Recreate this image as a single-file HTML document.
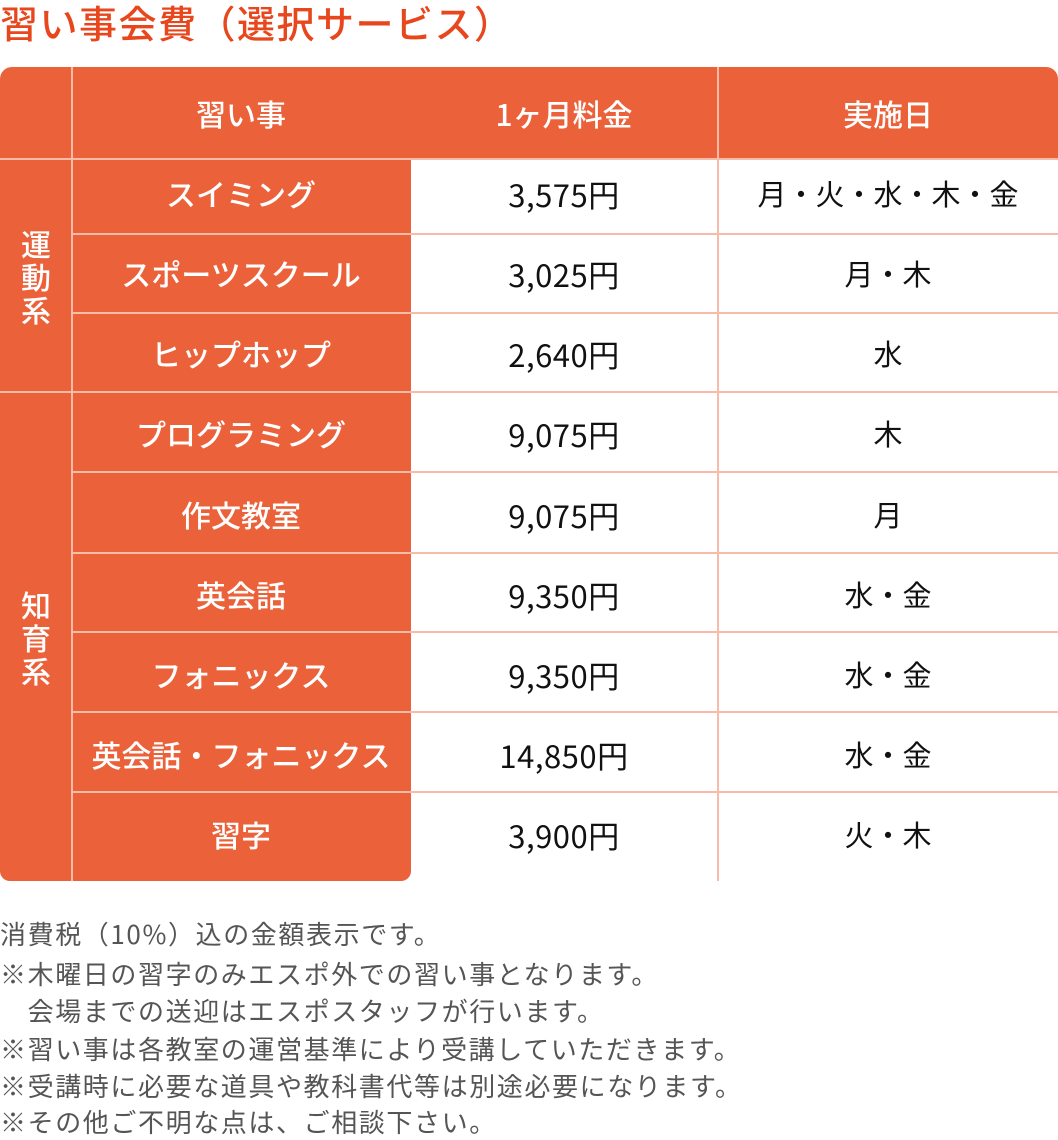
<!DOCTYPE html>
<html><head><meta charset="utf-8"><style>
*{margin:0;padding:0;box-sizing:border-box}
body{width:1058px;height:1136px;background:#fff;font-family:"Noto Sans CJK JP","Liberation Sans",sans-serif;position:relative;overflow:hidden}
.a{position:absolute}
.t{position:absolute;display:flex;align-items:center;justify-content:center;font-size:29px;white-space:nowrap}
.w{color:#fff;font-weight:500;font-size:30px}
.k{color:#111}
.p{font-size:31px;letter-spacing:0.5px}
.hl{position:absolute;height:2px;background:#f8bba8}
.vl{position:absolute;width:2px;background:#f8bba8}
.n{position:absolute;left:0;font-size:26px;letter-spacing:1.6px;color:#555;white-space:nowrap;line-height:1}
</style></head><body>
<div class="a" style="left:0;top:-6px;font-size:38px;color:#e8461c;font-weight:500;letter-spacing:1.5px">習い事会費（選択サービス）</div>
<div class="a" style="left:0;top:67px;width:1058px;height:92px;background:#eb613a;border-radius:12px 12px 0 0"></div>
<div class="a" style="left:0;top:150px;width:411px;height:731px;background:#eb613a;border-radius:0 0 10px 10px"></div>
<div class="vl" style="left:71px;top:67px;height:814px"></div>
<div class="vl" style="left:717px;top:67px;height:814px"></div>
<div class="hl" style="left:0;top:158px;width:1058px"></div>
<div class="hl" style="left:0;top:391px;width:1058px"></div>
<div class="hl" style="left:72px;top:233px;width:986px"></div>
<div class="hl" style="left:72px;top:312px;width:986px"></div>
<div class="hl" style="left:72px;top:471px;width:986px"></div>
<div class="hl" style="left:72px;top:552px;width:986px"></div>
<div class="hl" style="left:72px;top:631px;width:986px"></div>
<div class="hl" style="left:72px;top:711px;width:986px"></div>
<div class="hl" style="left:72px;top:791px;width:986px"></div>
<div class="t w" style="left:72px;width:338px;top:67px;height:92px">習い事</div>
<div class="t w" style="left:410px;width:308px;top:67px;height:92px">1ヶ月料金</div>
<div class="t w" style="left:718px;width:340px;top:67px;height:92px">実施日</div>
<div class="t w" style="left:0;width:72px;top:160px;height:232px;flex-direction:column;line-height:1.1">運<br>動<br>系</div>
<div class="t w" style="left:0;width:72px;top:393px;height:488px;flex-direction:column;line-height:1.1">知<br>育<br>系</div>
<div class="t w" style="left:72px;width:338px;top:173px;height:40px">スイミング</div>
<div class="t k p" style="left:410px;width:308px;top:173px;height:40px">3,575円</div>
<div class="t k" style="left:718px;width:340px;top:173px;height:40px">月・火・水・木・金</div>
<div class="t w" style="left:72px;width:338px;top:253px;height:40px">スポーツスクール</div>
<div class="t k p" style="left:410px;width:308px;top:253px;height:40px">3,025円</div>
<div class="t k" style="left:718px;width:340px;top:253px;height:40px">月・木</div>
<div class="t w" style="left:72px;width:338px;top:333px;height:40px">ヒップホップ</div>
<div class="t k p" style="left:410px;width:308px;top:333px;height:40px">2,640円</div>
<div class="t k" style="left:718px;width:340px;top:333px;height:40px">水</div>
<div class="t w" style="left:72px;width:338px;top:413px;height:40px">プログラミング</div>
<div class="t k p" style="left:410px;width:308px;top:413px;height:40px">9,075円</div>
<div class="t k" style="left:718px;width:340px;top:413px;height:40px">木</div>
<div class="t w" style="left:72px;width:338px;top:494px;height:40px">作文教室</div>
<div class="t k p" style="left:410px;width:308px;top:494px;height:40px">9,075円</div>
<div class="t k" style="left:718px;width:340px;top:494px;height:40px">月</div>
<div class="t w" style="left:72px;width:338px;top:574px;height:40px">英会話</div>
<div class="t k p" style="left:410px;width:308px;top:574px;height:40px">9,350円</div>
<div class="t k" style="left:718px;width:340px;top:574px;height:40px">水・金</div>
<div class="t w" style="left:72px;width:338px;top:654px;height:40px">フォニックス</div>
<div class="t k p" style="left:410px;width:308px;top:654px;height:40px">9,350円</div>
<div class="t k" style="left:718px;width:340px;top:654px;height:40px">水・金</div>
<div class="t w" style="left:72px;width:338px;top:734px;height:40px">英会話・フォニックス</div>
<div class="t k p" style="left:410px;width:308px;top:734px;height:40px">14,850円</div>
<div class="t k" style="left:718px;width:340px;top:734px;height:40px">水・金</div>
<div class="t w" style="left:72px;width:338px;top:814px;height:40px">習字</div>
<div class="t k p" style="left:410px;width:308px;top:814px;height:40px">3,900円</div>
<div class="t k" style="left:718px;width:340px;top:814px;height:40px">火・木</div>
<div class="n" style="top:921px">消費税（10%）込の金額表示です。</div>
<div class="n" style="top:961px">※木曜日の習字のみエスポ外での習い事となります。</div>
<div class="n" style="top:998px">　会場までの送迎はエスポスタッフが行います。</div>
<div class="n" style="top:1036px">※習い事は各教室の運営基準により受講していただきます。</div>
<div class="n" style="top:1073px">※受講時に必要な道具や教科書代等は別途必要になります。</div>
<div class="n" style="top:1109px">※その他ご不明な点は、ご相談下さい。</div>
</body></html>
